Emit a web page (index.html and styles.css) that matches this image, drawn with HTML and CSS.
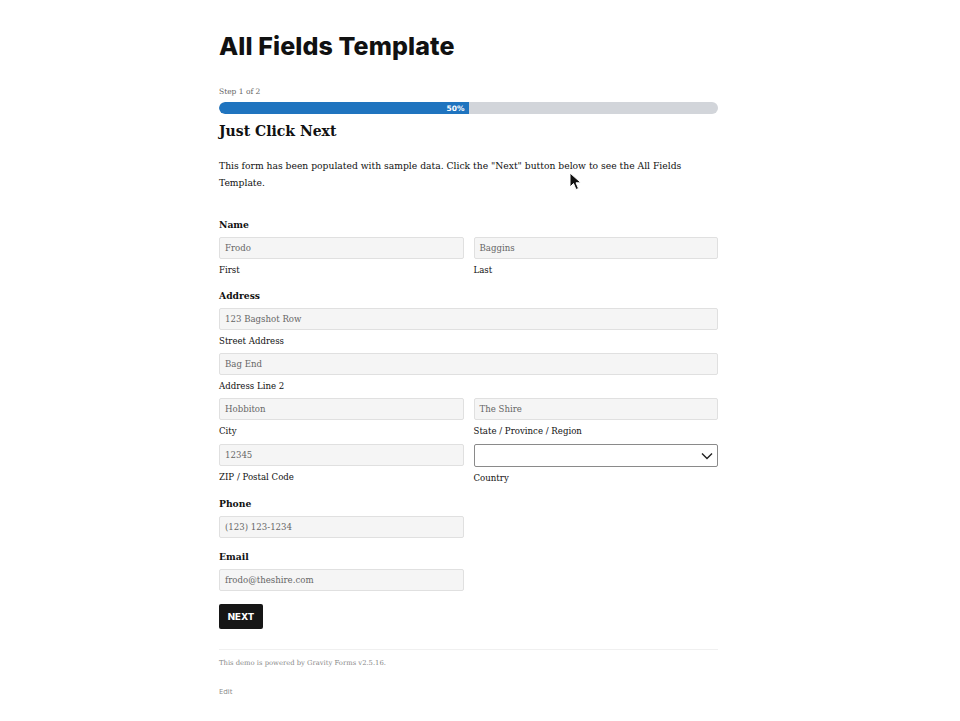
FILE: index.html
```html
<!DOCTYPE html>
<html>
<head>
<meta charset="utf-8">
<link rel="stylesheet" href="styles.css">
</head>
<body>
<main class="page">
  <h1 class="title">All Fields Template</h1>
  <div class="step">Step 1 of 2</div>
  <div class="progress"><div class="progress-fill" style="width:50%"><span>50%</span></div></div>
  <h2 class="section">Just Click Next</h2>
  <p class="intro">This form has been populated with sample data. Click the "Next" button below to see the All Fields Template.</p>

  <div class="field">
    <div class="label">Name</div>
    <div class="row">
      <div class="col"><div class="input">Frodo</div><div class="sub">First</div></div>
      <div class="col"><div class="input">Baggins</div><div class="sub">Last</div></div>
    </div>
  </div>

  <div class="field">
    <div class="label">Address</div>
    <div class="col"><div class="input">123 Bagshot Row</div><div class="sub">Street Address</div></div>
    <div class="col"><div class="input">Bag End</div><div class="sub">Address Line 2</div></div>
    <div class="row">
      <div class="col"><div class="input">Hobbiton</div><div class="sub">City</div></div>
      <div class="col"><div class="input">The Shire</div><div class="sub">State / Province / Region</div></div>
    </div>
    <div class="row tight">
      <div class="col"><div class="input">12345</div><div class="sub">ZIP / Postal Code</div></div>
      <div class="col"><div class="select"><svg class="chev" width="12" height="8" viewBox="0 0 12 8"><path d="M1 1.5 L6 6.5 L11 1.5" fill="none" stroke="#222" stroke-width="1.4"/></svg></div><div class="sub">Country</div></div>
    </div>
  </div>

  <div class="field plain">
    <div class="label">Phone</div>
    <div class="row"><div class="col"><div class="input">(123) 123-1234</div></div><div class="col"></div></div>
  </div>

  <div class="field plain">
    <div class="label">Email</div>
    <div class="row"><div class="col"><div class="input">frodo@theshire.com</div></div><div class="col"></div></div>
  </div>

  <button class="next">NEXT</button>

  <footer class="foot">
    <div class="powered">This demo is powered by Gravity Forms v2.5.16.</div>
    <div class="edit">Edit</div>
  </footer>
</main>
<svg class="cursor" width="14" height="20" viewBox="0 0 14 20"><path d="M1 1 L1 15 L4.5 11.5 L7 17.5 L9.5 16.5 L7 10.8 L12 10.8 Z" fill="#111" stroke="#fff" stroke-width="1"/></svg>
</body>
</html>
```
FILE: styles.css
```css
html, body { margin: 0; padding: 0; background: #fff; }
body { font-family: "DejaVu Serif", "Liberation Serif", serif; color: #111; position: relative; min-height: 721px; }
.page { width: 499px; margin-left: 219px; padding-top: 31px; }
.title { font-family: "Inter", "DejaVu Sans", sans-serif; font-weight: 800; font-size: 25px; line-height: 30px; margin: 0 0 26px 0; color: #111; letter-spacing: 0.1px; }
.step { font-size: 7.5px; color: #666; line-height: 10px; margin-bottom: 5px; }
.progress { height: 12px; background: #d2d5da; border-radius: 6px; overflow: hidden; }
.progress-fill { height: 100%; background: #1f74bf; display: flex; justify-content: flex-end; align-items: center; border-radius: 6px 0 0 6px; }
.progress-fill span { color: #fff; font-size: 7.5px; font-weight: bold; padding-right: 4px; font-family: "DejaVu Sans", sans-serif; }
.section { font-size: 14px; font-weight: bold; margin: 8px 0 17px; line-height: 18px; }
.intro { font-size: 9.2px; line-height: 17px; margin: 0 0 28px; }
.field { margin-bottom: 8px; }
.field.plain { margin-bottom: 13px; }
.label { font-size: 9.2px; font-weight: bold; line-height: 12px; margin-bottom: 6px; }
.row { display: flex; gap: 10px; }
.row.tight { margin-top: 1px; }
.col { flex: 1; min-width: 0; }
.input { height: 20px; border: 1px solid #e0e0e0; background: #f5f5f5; border-radius: 2px; font-size: 8.6px; color: #666; line-height: 20px; padding: 0 5px; box-sizing: content-box; }
.select { height: 21px; border: 1px solid #8a8a8a; background: #fff; border-radius: 2px; display: flex; align-items: center; justify-content: flex-end; padding-right: 4px; }
.sub { font-size: 8.6px; line-height: 12px; margin-top: 5px; margin-bottom: 6px; }
.next { display: block; background: #161616; color: #fff; border: 0; border-radius: 2px; font-family: "Inter", "DejaVu Sans", sans-serif; font-weight: 800; font-size: 9.5px; width: 44px; height: 25px; padding: 0; margin-top: 1px; }
.foot { margin-top: 20px; border-top: 1px solid #f0f0f0; padding-top: 8px; }
.powered { font-size: 6.8px; color: #888; line-height: 10px; }
.edit { font-family: "Open Sans", sans-serif; font-size: 7.5px; color: #888; margin-top: 18px; }
.cursor { position: absolute; left: 569px; top: 172px; }
```
